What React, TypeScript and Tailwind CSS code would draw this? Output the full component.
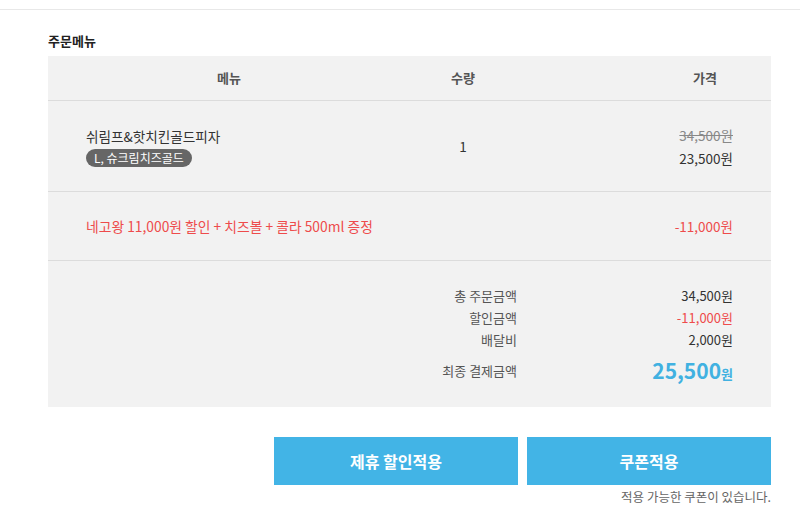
const font = { fontFamily: '"Noto Sans CJK KR", "Noto Sans", sans-serif' };

const summary = [
  { label: "총 주문금액", value: "34,500원", color: "text-[#333]" },
  { label: "할인금액", value: "-11,000원", color: "text-[#ee4b4b]" },
  { label: "배달비", value: "2,000원", color: "text-[#333]" },
];

export default function App() {
  return (
    <div className="w-[800px] h-[515px] bg-white overflow-hidden" style={font}>
      <div className="h-[10px] border-b border-[#e8e8e8]" />
      <div className="pl-[48px] pr-[29px]">
        {/* 주문메뉴 */}
        <h2 className="mt-[21px] text-[13px] leading-[20px] font-bold text-[#222]">주문메뉴</h2>
        <div className="mt-[5px] bg-[#f2f2f2]">
          {/* 헤더 */}
          <div className="grid grid-cols-[362px_106px_1fr] h-[45px] items-center border-b border-[#dcdcdc] text-[13px] font-bold text-[#555]">
            <div className="text-center">메뉴</div>
            <div className="text-center">수량</div>
            <div className="text-right pr-[54px]">가격</div>
          </div>
          {/* 메뉴 행 */}
          <div className="grid grid-cols-[362px_106px_1fr] h-[91px] items-center border-b border-[#dcdcdc] text-[13.5px] text-[#333]">
            <div className="pl-[38px] flex flex-col items-start gap-[3px]">
              <div className="leading-[20px] text-[13.6px]">쉬림프&amp;핫치킨골드피자</div>
              <span className="h-[18px] px-[8px] rounded-full bg-[#666] text-white text-[12px] leading-[18px]">L, 슈크림치즈골드</span>
            </div>
            <div className="text-center">1</div>
            <div className="pr-[38px] flex flex-col items-end gap-[3px]">
              <div className="leading-[20px] text-[#888] line-through">34,500원</div>
              <div className="leading-[20px]">23,500원</div>
            </div>
          </div>
          {/* 할인 행 */}
          <div className="flex h-[69px] items-center justify-between border-b border-[#dcdcdc] pl-[38px] pr-[38px] text-[13.8px] text-[#ee4b4b]">
            <div>네고왕 11,000원 할인 + 치즈볼 + 콜라 500ml 증정</div>
            <div className="text-[13.5px]">-11,000원</div>
          </div>
          {/* 합계 */}
          <div className="pt-[24px] pb-[16px] pr-[38px] flex flex-col items-end text-[13px]">
            {summary.map((s) => (
              <div key={s.label} className="flex h-[22px] items-center">
                <div className="w-[120px] text-right text-[#555]">{s.label}</div>
                <div className={`w-[216px] text-right ${s.color}`}>{s.value}</div>
              </div>
            ))}
            <div className="flex h-[40px] items-center">
              <div className="w-[120px] text-right text-[#555]">최종 결제금액</div>
              <div className="w-[216px] text-right text-[#41b1e1] font-bold">
                <span className="text-[21px]">25,500</span>
                <span className="text-[13px]">원</span>
              </div>
            </div>
          </div>
        </div>
        {/* 버튼 */}
        <div className="mt-[30px] flex justify-end gap-[9px]">
          <button className="w-[244px] h-[48px] bg-[#42b4e6] text-white text-[16px] font-bold">제휴 할인적용</button>
          <button className="w-[244px] h-[48px] bg-[#42b4e6] text-white text-[16px] font-bold">쿠폰적용</button>
        </div>
        <p className="mt-[4px] text-right text-[12.5px] leading-[16px] text-[#666]">적용 가능한 쿠폰이 있습니다.</p>
      </div>
    </div>
  );
}
